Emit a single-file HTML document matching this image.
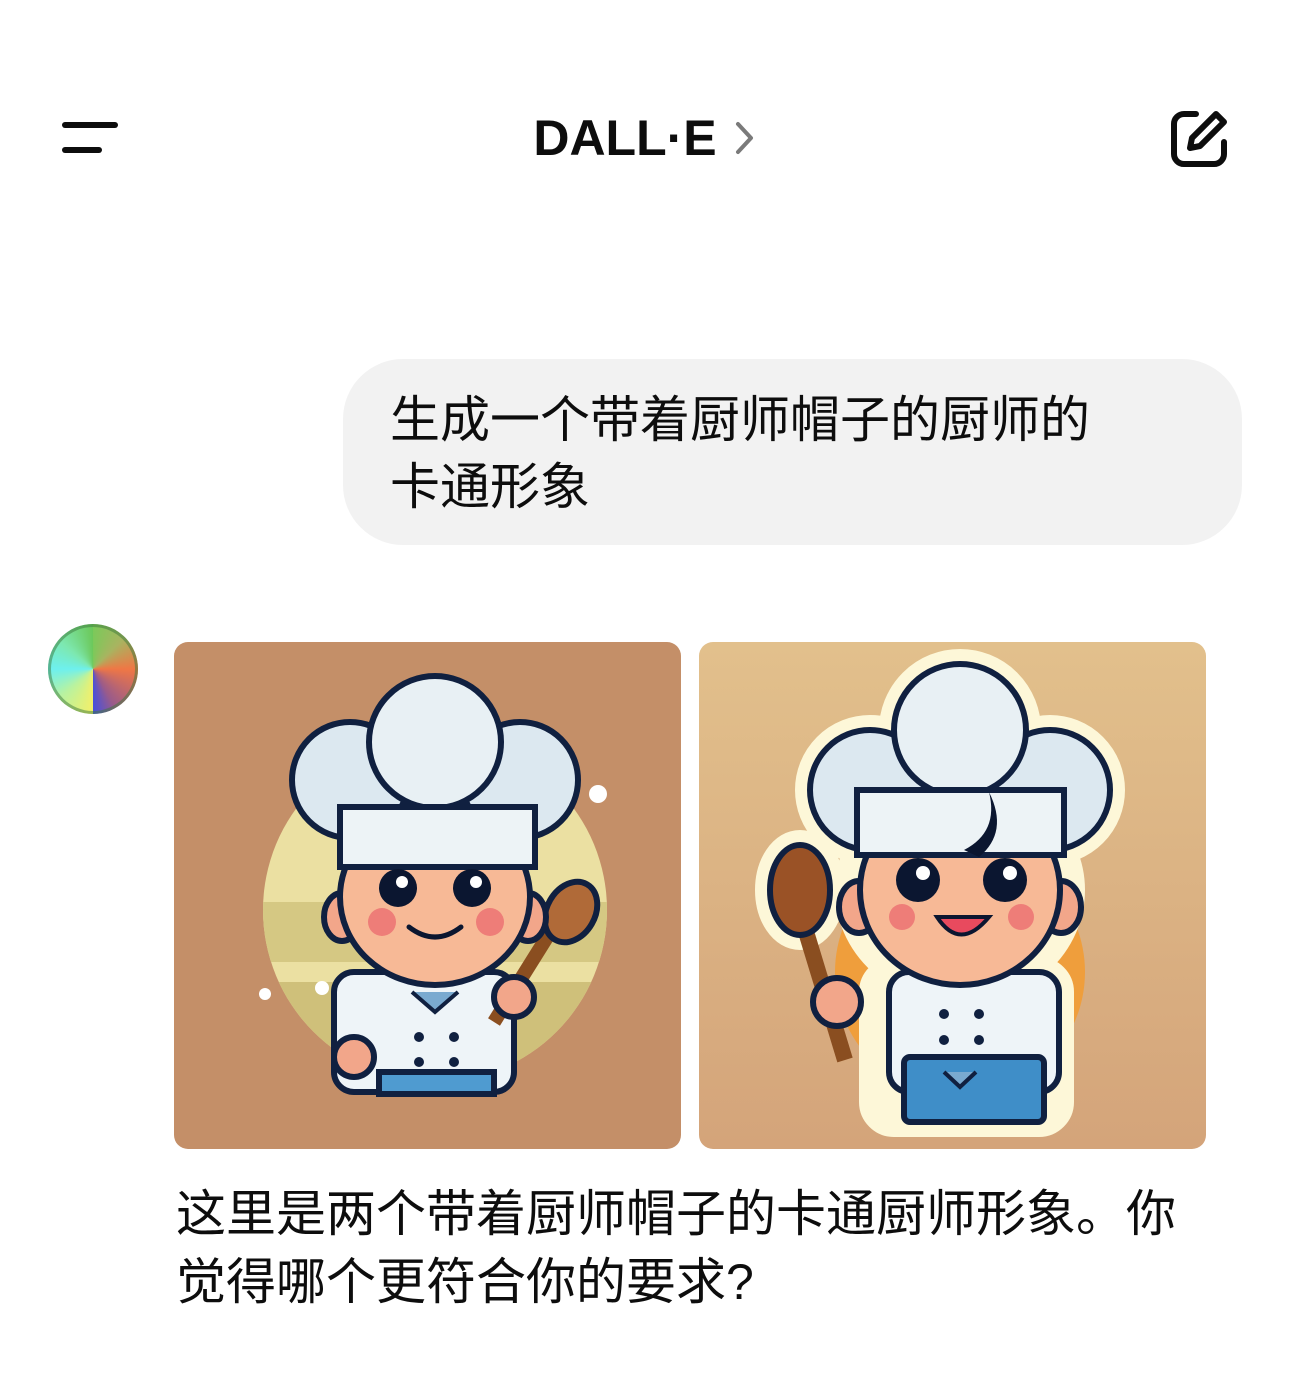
<!DOCTYPE html>
<html><head><meta charset="utf-8">
<style>
*{margin:0;padding:0;box-sizing:border-box}
body{width:1290px;height:1376px;background:#fff;position:relative;overflow:hidden;font-family:"Liberation Sans","Noto Sans CJK SC",sans-serif;color:#0d0d0d}
.abs{position:absolute}
.title{left:0;width:1290px;top:108px;text-align:center;font-size:50px;font-weight:bold;line-height:60px;padding-right:40px}
.bubble{left:343px;top:359px;width:899px;height:186px;background:#f2f2f2;border-radius:60px}
.btext{left:390px;top:387px;font-size:50px;line-height:67px;letter-spacing:0;font-family:"Liberation Sans","Noto Sans CJK SC",sans-serif}
.avatar{left:48px;top:624px;width:90px;height:90px;border-radius:50%;background:conic-gradient(#7cc95a 0deg,#a8b460 45deg,#ef7745 90deg,#9a5b8a 150deg,#4650dc 180deg,#f2f06a 180deg,#b8f2a0 230deg,#6ef0ee 270deg,#7de8b0 310deg,#6cc85a 360deg);box-shadow:inset 0 0 0 3px rgba(60,120,60,.5)}
.img{top:642px;width:507px;height:507px;border-radius:14px;overflow:hidden}
.rtext{left:176px;top:1180px;font-size:50px;line-height:68px;width:1040px}
</style></head><body>
<svg class="abs" style="left:60px;top:120px" width="60" height="36" viewBox="0 0 60 36"><rect x="2" y="2" width="56" height="6" rx="3" fill="#0d0d0d"/><rect x="2" y="27" width="40" height="6" rx="3" fill="#0d0d0d"/></svg>
<div class="abs title">DALL·E <svg style="position:absolute;left:733px;top:12px" width="24" height="36" viewBox="0 0 24 36"><path d="M5 4 L18 18 L5 32" fill="none" stroke="#7a7a7a" stroke-width="4" stroke-linecap="round" stroke-linejoin="round"/></svg></div>
<svg class="abs" style="left:1170px;top:108px" width="60" height="60" viewBox="0 0 60 60"><path d="M26 6 H14 A10 10 0 0 0 4 16 V46 A10 10 0 0 0 14 56 H44 A10 10 0 0 0 54 46 V34" fill="none" stroke="#0d0d0d" stroke-width="6" stroke-linecap="round"/><path d="M46 6 L54 14 L30 38 L20 40 L22 30 Z" fill="none" stroke="#0d0d0d" stroke-width="6" stroke-linejoin="round"/></svg>
<div class="abs bubble"></div>
<div class="abs btext">生成一个带着厨师帽子的厨师的<br>卡通形象</div>
<div class="abs avatar"></div>

<svg class="abs img" style="left:174px" viewBox="0 0 507 507">
<defs><clipPath id="cc"><circle cx="261" cy="268" r="172"/></clipPath></defs>
<rect width="507" height="507" fill="#c48f68"/>
<g clip-path="url(#cc)">
<rect width="507" height="507" fill="#ebe0a2"/>
<rect x="89" y="260" width="345" height="60" fill="#d5c883"/>
<rect x="89" y="340" width="345" height="170" fill="#cfc07a"/>
</g>
<g stroke="#102040" stroke-width="6">
<rect x="160" y="330" width="180" height="120" rx="20" fill="#eef4f8"/>
<rect x="205" y="430" width="115" height="22" fill="#4f9bd0"/>
<path d="M395 260 L320 380" stroke="#8a4e20" stroke-width="14"/>
<ellipse cx="397" cy="270" rx="24" ry="32" fill="#b06a38" transform="rotate(30 397 270)"/>
<circle cx="340" cy="355" r="20" fill="#f2a68a"/>
<circle cx="180" cy="415" r="20" fill="#f2a68a"/>
<ellipse cx="168" cy="275" rx="18" ry="24" fill="#f2a68a"/>
<ellipse cx="354" cy="275" rx="18" ry="24" fill="#f2a68a"/>
<ellipse cx="261" cy="255" rx="95" ry="88" fill="#f7b996"/>
<circle cx="176" cy="138" r="58" fill="#dce8f0"/>
<circle cx="346" cy="138" r="58" fill="#dce8f0"/>
<circle cx="261" cy="100" r="66" fill="#e8f0f4"/>
<rect x="166" y="165" width="195" height="60" fill="#edf3f6"/>
</g>
<circle cx="224" cy="246" r="19" fill="#0b1630"/><circle cx="298" cy="246" r="19" fill="#0b1630"/>
<circle cx="228" cy="240" r="6" fill="#fff"/><circle cx="302" cy="240" r="6" fill="#fff"/>
<circle cx="208" cy="280" r="14" fill="#ee7d78"/><circle cx="316" cy="280" r="14" fill="#ee7d78"/>
<path d="M235 285 Q261 305 287 285" fill="none" stroke="#0b1630" stroke-width="5" stroke-linecap="round"/>
<path d="M238 350 L261 370 L284 350" fill="#7aaad0" stroke="#102040" stroke-width="4"/>
<g fill="#102040"><circle cx="245" cy="395" r="5"/><circle cx="280" cy="395" r="5"/><circle cx="245" cy="420" r="5"/><circle cx="280" cy="420" r="5"/></g>
<circle cx="424" cy="152" r="9" fill="#fff"/><circle cx="91" cy="352" r="6" fill="#fff"/><circle cx="148" cy="346" r="7" fill="#fff"/>
</svg>

<svg class="abs img" style="left:699px" viewBox="0 0 507 507">
<defs><linearGradient id="g2" x1="0" y1="0" x2="0" y2="1"><stop offset="0" stop-color="#e2c08c"/><stop offset="1" stop-color="#d4a47a"/></linearGradient></defs>
<rect width="507" height="507" fill="url(#g2)"/>
<circle cx="261" cy="330" r="125" fill="#ef9e3c"/>
<g stroke="#fdf7d8" stroke-width="30" fill="#fdf7d8" stroke-linejoin="round">
<circle cx="171" cy="148" r="60"/><circle cx="351" cy="148" r="60"/><circle cx="261" cy="88" r="66"/>
<ellipse cx="261" cy="248" rx="110" ry="100"/><rect x="175" y="330" width="185" height="150" rx="20"/>
<ellipse cx="101" cy="248" rx="30" ry="45"/>
</g>
<g stroke="#102040" stroke-width="6">
<path d="M101 270 L146 418" stroke="#8a4e20" stroke-width="16"/>
<ellipse cx="101" cy="248" rx="30" ry="45" fill="#9a5226"/>
<rect x="190" y="330" width="170" height="120" rx="20" fill="#eef4f8"/>
<rect x="205" y="415" width="140" height="65" rx="6" fill="#3f8ec8"/>
<circle cx="138" cy="360" r="24" fill="#f2a68a"/>
<ellipse cx="160" cy="265" rx="20" ry="26" fill="#f2a68a"/>
<ellipse cx="362" cy="265" rx="20" ry="26" fill="#f2a68a"/>
<ellipse cx="261" cy="248" rx="100" ry="95" fill="#f7b996"/>
<circle cx="171" cy="148" r="60" fill="#dce8f0"/>
<circle cx="351" cy="148" r="60" fill="#dce8f0"/>
<circle cx="261" cy="88" r="66" fill="#e8f0f4"/>
<rect x="158" y="148" width="207" height="65" fill="#edf3f6"/>
</g>
<path d="M265 208 Q300 190 290 150 Q310 190 280 215 Z" fill="#0b1630"/>
<circle cx="219" cy="238" r="22" fill="#0b1630"/><circle cx="306" cy="238" r="22" fill="#0b1630"/>
<circle cx="224" cy="231" r="7" fill="#fff"/><circle cx="311" cy="231" r="7" fill="#fff"/>
<circle cx="203" cy="275" r="13" fill="#ee7d78"/><circle cx="322" cy="275" r="13" fill="#ee7d78"/>
<path d="M238 275 Q261 310 290 275 Z" fill="#e84a5e" stroke="#0b1630" stroke-width="4"/>
<g fill="#102040"><circle cx="245" cy="372" r="5"/><circle cx="280" cy="372" r="5"/><circle cx="245" cy="398" r="5"/><circle cx="280" cy="398" r="5"/></g>
<path d="M245 430 L261 445 L277 430" fill="#7aaad0" stroke="#102040" stroke-width="4"/>
</svg>

<div class="abs rtext">这里是两个带着厨师帽子的卡通厨师形象。你<br>觉得哪个更符合你的要求?</div>
</body></html>
